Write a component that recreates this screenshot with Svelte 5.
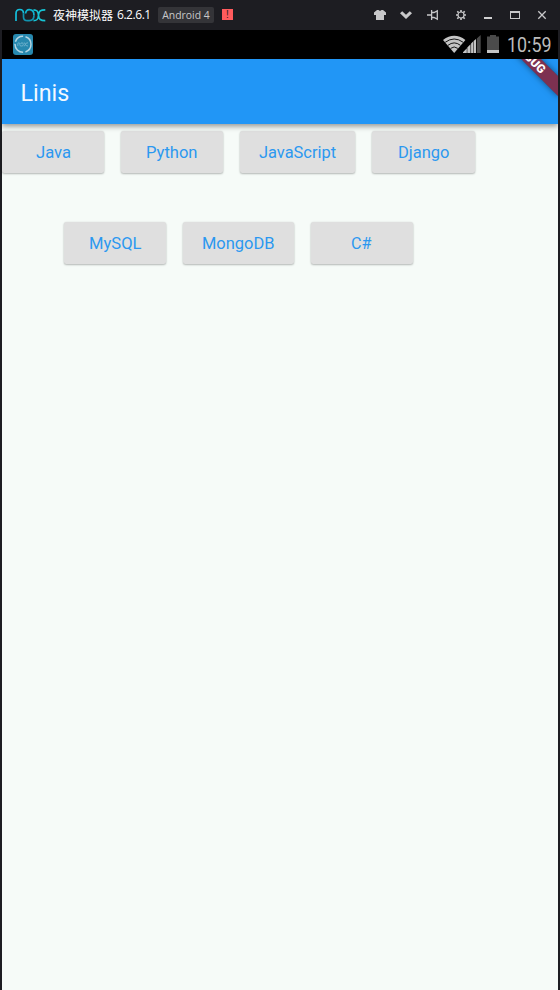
<script>
  const rows = [
    [
      { label: 'Java', width: 102, text: 35 },
      { label: 'Python', width: 102, text: 51.5 },
      { label: 'JavaScript', width: 115, text: 77 },
      { label: 'Django', width: 102.5, text: 51.5 }
    ],
    [
      { label: 'MySQL', width: 102, text: 52.5 },
      { label: 'MongoDB', width: 110.5, text: 72.5 },
      { label: 'C#', width: 102, text: 20.5 }
    ]
  ];
</script>

<div class="window">
  <header class="titlebar">
    <svg class="nox" width="31" height="14" viewBox="0 0 31 14" fill="none" stroke-width="1.7">
      <path stroke="#14bedb" d="M1 13V5.5C1 2.8 2.4 1.5 4.8 1.5S8.5 2.8 8.5 5.5" />
      <path stroke="#1192ae" d="M8.5 5.5V9c0 2.5 1.7 3.7 4.2 3.7h1.5c3 0 4.8-2.2 4.8-5.4" />
      <path stroke="#10b4d0" d="M10.6 5.5c.3-2.5 1.5-3.8 3.6-3.8 3 0 4.8 2.3 4.8 5.5" />
      <path stroke="#16c4d4" d="M18.5 1.8c3.4 0 4.7 1.2 5 5.4.3 4.2 2 5.4 6.8 5.4M30.3 1.8c-4.8 0-6.5 1.2-6.8 5.4-.3 4.2-1.6 5.4-5 5.4" />
    </svg>
    <span class="name">夜神模拟器</span>
    <span class="version">6.2.6.1</span>
    <span class="tag">Android 4</span>
    <span class="alert">!</span>
    <div class="controls">
      <svg width="14" height="12" viewBox="0 0 14 12"><path fill="#c8c8ca" d="M4 1h1.5l1.5 1 1.5-1H10l3 2.5V6h-2v5H3V6H1V3.5z" /></svg>
      <svg width="14" height="12" viewBox="0 0 14 12"><path fill="#c8c8ca" d="M0 4.2 2.2 2.2 6 5.8l3.8-3.6L12 4.2 6 10z" /></svg>
      <svg width="14" height="12" viewBox="0 0 14 12" fill="none" stroke="#c8c8ca" stroke-width="1.3"><path d="M0 6h4M4.6 1v10M5 3.5h2L10.3 1.9v8.2L7 8.5H5" /></svg>
      <svg width="14" height="12" viewBox="0 0 14 12" fill="none" stroke="#c8c8ca"><circle cx="7" cy="6" r="3" stroke-width="1.2" /><path stroke-width="1.6" d="M7 1v2M7 9v2M2 6h2M10 6h2M3.3 2.3l1.3 1.3M9.4 8.4l1.3 1.3M3.3 9.7l1.3-1.3M9.4 3.6l1.3-1.3" /></svg>
      <svg width="14" height="12" viewBox="0 0 14 12"><path fill="#d0d0d2" d="M3 8h8v2H3z" /></svg>
      <svg width="14" height="12" viewBox="0 0 14 12"><path fill="#c8c8ca" fill-rule="evenodd" d="M2 2h10v8H2zM3 4v5h8V4z" /></svg>
      <svg width="14" height="12" viewBox="0 0 14 12"><path fill="none" stroke="#c8c8ca" stroke-width="1.3" d="m3.3 2.3 7.4 7.4M10.7 2.3 3.3 9.7" /></svg>
    </div>
  </header>

  <main class="device">
    <div class="status">
      <svg class="app" width="20" height="21" viewBox="0 0 20 21">
        <rect width="20" height="21" rx="3" fill="#2788ae" />
        <circle cx="10" cy="10.3" r="8" fill="none" stroke="#b4d5e2" stroke-width="1.5" stroke-dasharray="10 2.4 13 2.2" />
        <path fill="none" stroke="#79b8d0" stroke-width=".8" d="M4.8 12V9.8q0-1 1-1t1 1v1q0 1.2 1.2 1.2h1q1.3 0 1.3-1.6T9 8.8 7.8 10M10.8 8.8q1.4 0 1.6 1.6t2.6 1.6m0-3.2q-2.4 0-2.6 1.6T10.8 12" />
      </svg>
      <div class="signals">
        <svg width="23" height="20" viewBox="0 0 23 20">
          <path fill="#c4c4c4" d="M0 5Q11.2-3.4 22.4 5L11.2 18z" />
          <path fill="none" stroke="#000" stroke-width=".9" d="M2.2 7.3q9-6.6 18 0M5 10.3q6.2-4.8 12.4 0M7.6 13.4q3.6-2.9 7.2 0" />
        </svg>
        <svg class="cell" width="18" height="20" viewBox="0 0 18 20">
          <path fill="#c4c4c4" d="M0 18v-.7l3.8-4.1V18zM4.3 18v-5.4L7.5 9.2V18zM8.1 18V8.5l2-2V18zM10.6 18V6L13 3.9V18z" />
          <path fill="#4b4b4b" d="M13.8 18V3.5L17.7 0v18z" />
        </svg>
        <svg class="battery" width="12" height="20" viewBox="0 0 12 20">
          <path fill="#4b4b4b" d="M3 0h6v1.5h3V15H0V1.5h3z" />
          <path fill="#c4c4c4" d="M0 15h12v3H0z" />
        </svg>
        <svg class="clock" width="45" height="24"><text x="0" y="19" textLength="44.5" lengthAdjust="spacingAndGlyphs">10:59</text></svg>
      </div>
    </div>

    <div class="appbar">
      <h1>Linis</h1>
      <div class="banner">DEBUG</div>
    </div>

    <div class="content">
      {#each rows as row}
        <div class="row">
          {#each row as item}
            <button style:width="{item.width}px">
              <svg width={item.text} height="24"><text x="0" y="18" textLength={item.text} lengthAdjust="spacingAndGlyphs">{item.label}</text></svg>
            </button>
          {/each}
        </div>
      {/each}
    </div>
  </main>
</div>

<style>
  .window {
    width: 560px;
    height: 990px;
    background: #1d1d22;
    display: flex;
    flex-direction: column;
    overflow: hidden;
    font-family: Roboto, "Noto Sans CJK SC", sans-serif;
  }
  svg { display: block; flex: none; overflow: visible; }
  .titlebar {
    height: 30px;
    flex: none;
    display: flex;
    align-items: center;
    padding: 0 11px 0 15px;
    color: #fff;
    font-size: 12px;
    white-space: nowrap;
  }
  .nox { margin-right: 7px; }
  .name { font-family: "Noto Sans CJK SC", sans-serif; width: 64px; line-height: 18px; margin-top: -1px; }
  .version { font-family: "Open Sans", sans-serif; font-size: 12px; width: 41px; letter-spacing: -0.45px; margin-top: -1px; }
  .tag {
    box-sizing: border-box;
    width: 56px;
    height: 16px;
    border-radius: 2px;
    background: #343438;
    color: #c8c8ca;
    font: 10.4px/16px "Open Sans", sans-serif;
    text-align: center;
  }
  .alert {
    width: 11px;
    height: 11px;
    margin: -1px 0 0 8px;
    background: #ff5b5d;
    color: #2b1c22;
    font: 10px/11px "Liberation Sans", sans-serif;
    text-align: center;
  }
  .controls { display: flex; gap: 13px; margin-left: auto; }
  .device {
    flex: 1;
    margin: 0 2px;
    background: #f6fbf8;
    display: flex;
    flex-direction: column;
  }
  .status {
    height: 29px;
    flex: none;
    background: #000;
    position: relative;
    z-index: 2;
    display: flex;
    align-items: center;
    justify-content: space-between;
    padding: 0 6.5px 0 11px;
  }
  .signals { display: flex; align-items: center; }
  .cell { margin-left: -3px; }
  .battery { margin: 0 7.5px 0 6px; }
  .clock text { font: 19.3px Roboto, sans-serif; fill: #bcbcbc; }
  .appbar {
    height: 65px;
    flex: none;
    background: #2196f6;
    position: relative;
    clip-path: inset(0 0 -12px 0);
    box-shadow: 0 2px 5px rgba(0, 0, 0, .34), 0 4px 6px rgba(0, 0, 0, .08);
    display: flex;
    align-items: center;
    padding-left: 18.5px;
  }
  h1 { margin: 2px 0 0; font: 400 23.3px/28px Roboto, sans-serif; color: #f3f9ff; }
  .banner {
    position: absolute;
    width: 94px;
    height: 14px;
    right: -19px;
    top: -8.5px;
    transform: rotate(45deg);
    background: rgba(151, 20, 34, .78);
    box-shadow: 0 0 6px rgba(0, 0, 0, .5);
    color: #fff;
    font: 900 11.9px/14px Roboto, sans-serif;
    text-align: center;
  }
  .content { padding-top: 7px; display: flex; flex-direction: column; gap: 49px; }
  .row { display: flex; gap: 17px; }
  .row:nth-child(2) { margin-left: 62px; }
  button {
    flex: none;
    height: 42px;
    padding: 0;
    border: 0;
    border-radius: 2.5px;
    background: #dfdfdf;
    box-shadow: 0 1px 2px rgba(0, 0, 0, .25), 0 0 2px rgba(0, 0, 0, .08);
    display: flex;
    align-items: center;
    justify-content: center;
  }
  button text { font: 400 16.3px Roboto, sans-serif; fill: #2b98f0; }
</style>
